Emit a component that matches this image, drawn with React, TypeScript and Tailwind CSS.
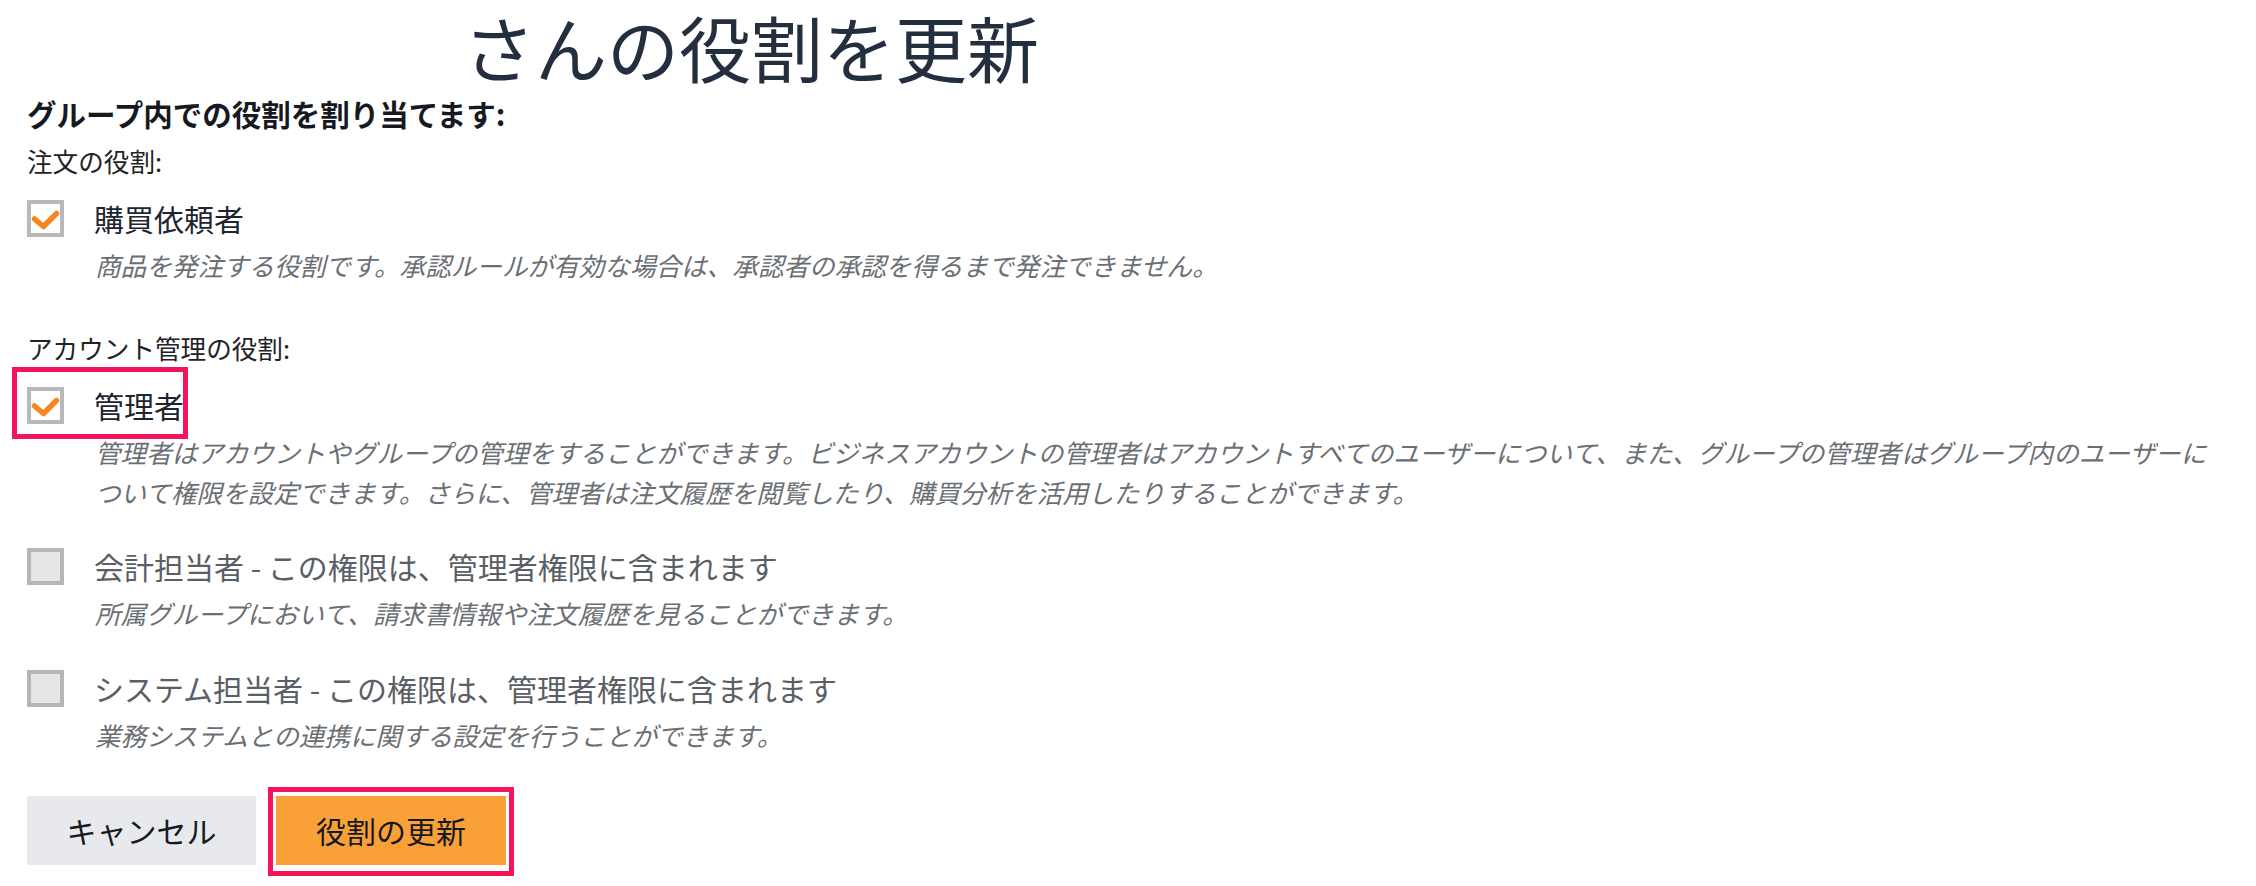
import React from "react";

function Box({ checked }: { checked: boolean }) {
  if (checked) {
    return (
      <div className="w-[37px] h-[37px] shrink-0 border-4 border-[#b7babd] bg-white">
        <svg width="29" height="29" viewBox="0 0 29 29" className="block">
          <polyline
            points="3.5,15 12.5,22.5 25.5,9.5"
            fill="none"
            stroke="#f7861f"
            strokeWidth="5.5"
            strokeLinecap="round"
            strokeLinejoin="round"
          />
        </svg>
      </div>
    );
  }
  return <div className="w-[37px] h-[37px] shrink-0 border-4 border-[#b6b6b6] bg-[#e6e6e6]" />;
}

function Row({
  checked,
  label,
  muted,
  highlight,
}: {
  checked: boolean;
  label: string;
  muted?: boolean;
  highlight?: boolean;
}) {
  return (
    <div className="flex">
      <div className="relative inline-flex items-center gap-[30px]">
        <Box checked={checked} />
        <span
          className={`text-[30px] leading-[37px] whitespace-nowrap ${
            muted ? "text-[#5a5f66]" : "text-[#1d2530]"
          }`}
        >
          {label}
        </span>
        {highlight && (
          <div className="absolute left-[-15px] top-[-20px] bottom-[-15px] right-[-4px] border-[5px] border-[#f3145a] pointer-events-none" />
        )}
      </div>
    </div>
  );
}

function Desc({ children }: { children: React.ReactNode }) {
  return (
    <p className="mt-[8px] pl-[68px] text-[25.6px] leading-[40px] italic text-[#6b6f74]">
      {children}
    </p>
  );
}

export default function App() {
  return (
    <div
      className="w-[2256px] min-h-[886px] bg-white px-[27px]"
      style={{ fontFamily: '"Noto Sans CJK JP", "Noto Sans", sans-serif' }}
    >
      <h1 className="pt-[3px] pl-[436px] text-[72px] leading-[86px] font-normal text-[#232f3e] whitespace-nowrap">
        さんの役割を更新
      </h1>
      <h2 className="mt-[6px] text-[29.5px] leading-[36px] font-bold text-[#16191f]">
        グループ内での役割を割り当てます:
      </h2>
      <div className="mt-[12px] text-[25.6px] leading-[36px] text-[#1f2328]">注文の役割:</div>
      <div className="mt-[21px]">
        <Row checked label="購買依頼者" />
      </div>
      <Desc>
        商品を発注する役割です。承認ルールが有効な場合は、承認者の承認を得るまで発注できません。
      </Desc>

      <div className="mt-[45px] text-[25.6px] leading-[36px] text-[#1f2328]">アカウント管理の役割:</div>
      <div className="mt-[21px]">
        <Row checked label="管理者" highlight />
      </div>
      <Desc>
        管理者はアカウントやグループの管理をすることができます。ビジネスアカウントの管理者はアカウントすべてのユーザーについて、また、グループの管理者はグループ内のユーザーについて権限を設定できます。さらに、管理者は注文履歴を閲覧したり、購買分析を活用したりすることができます。
      </Desc>

      <div className="mt-[36px]">
        <Row checked={false} muted label="会計担当者 - この権限は、管理者権限に含まれます" />
      </div>
      <Desc>所属グループにおいて、請求書情報や注文履歴を見ることができます。</Desc>

      <div className="mt-[37px]">
        <Row checked={false} muted label="システム担当者 - この権限は、管理者権限に含まれます" />
      </div>
      <Desc>業務システムとの連携に関する設定を行うことができます。</Desc>

      <div className="mt-[41px] flex gap-[20px]">
        <button className="w-[229px] h-[69px] bg-[#e7e9ec] text-[30px] text-[#16191f]">
          キャンセル
        </button>
        <div className="relative">
          <button className="w-[230px] h-[69px] bg-[#f9a137] text-[30px] text-[#16191f]">
            役割の更新
          </button>
          <div className="absolute left-[-8px] right-[-8px] top-[-9px] bottom-[-11px] border-[5px] border-[#f3145a] pointer-events-none" />
        </div>
      </div>
    </div>
  );
}
